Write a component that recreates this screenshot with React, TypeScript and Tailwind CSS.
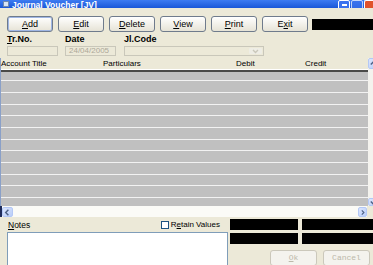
import React from "react";

const toolButtons = [
  { pre: "", key: "A", post: "dd" },
  { pre: "", key: "E", post: "dit" },
  { pre: "", key: "D", post: "elete" },
  { pre: "", key: "V", post: "iew" },
  { pre: "", key: "P", post: "rint" },
  { pre: "E", key: "x", post: "it" },
];

// row heights incl. the white separator line
const rows = [
  "h-[9px]",
  "h-[12px]",
  "h-[12px]",
  "h-[11px]",
  "h-[12px]",
  "h-[12px]",
  "h-[11px]",
  "h-[12px]",
  "h-[12px]",
  "h-[11px]",
  "h-[12px]",
];

const ScrollArrow: React.FC<{ dir: "up" | "down" | "left" | "right"; className?: string }> = ({
  dir,
  className,
}) => {
  const d =
    dir === "up"
      ? "M2 6 L5 3 L8 6"
      : dir === "down"
      ? "M2 4 L5 7 L8 4"
      : dir === "left"
      ? "M6 2 L3 5 L6 8"
      : "M4 2 L7 5 L4 8";
  return (
    <div
      className={`flex items-center justify-center rounded-[2px] border border-[#b4c8f6] bg-gradient-to-br from-[#dce6fd] to-[#b9cdf8] ${className ?? ""}`}
    >
      <svg width="9" height="9" viewBox="0 0 10 10">
        <path d={d} fill="none" stroke="#4d6185" strokeWidth="1.6" />
      </svg>
    </div>
  );
};

const App: React.FC = () => {
  return (
    <div className="w-[373px] h-[265px] overflow-hidden bg-[#ece9d8] flex flex-col text-black font-['Liberation_Sans',Arial,sans-serif]">
      {/* title bar */}
      <div className="h-[8px] shrink-0 flex items-end overflow-hidden bg-gradient-to-b from-[#3d7cf2] to-[#1a57d8]">
        <div className="ml-[3px] mb-[1px] w-[6px] h-[6px] bg-[#d8e4f4] border border-[#6d87b0]" />
        <span className="ml-[3px] mb-[-1px] text-[8.5px] font-bold leading-none text-white whitespace-nowrap">
          Journal Voucher [JV]
        </span>
        <div className="ml-auto flex items-end gap-[1px]">
          <div className="w-[12px] h-[12px] mb-[-4px] rounded-[2px] border border-white bg-[#3a72ee] flex items-end justify-center">
            <div className="w-[5px] h-[2px] bg-white mb-[5px]" />
          </div>
          <div className="w-[12px] h-[12px] mb-[-4px] rounded-[2px] border border-white bg-[#3a72ee] opacity-70" />
          <div className="w-[9px] h-[12px] mb-[-4px] rounded-l-[2px] border border-r-0 border-white bg-[#e0532c]" />
        </div>
      </div>
      <div className="h-[1px] bg-[#f6f4ea]" />

      {/* tool buttons */}
      <div className="flex items-center mt-[8px] pl-[7px] gap-[5px] h-[16px]">
        {toolButtons.map((b, i) => (
          <button
            key={i}
            className={`w-[46px] h-[16px] rounded-[3px] border border-[#6f7b8c] bg-gradient-to-b from-[#ffffff] to-[#e6e3d6] text-[9px] leading-none flex items-center justify-center ${
              i === 0 ? "shadow-[inset_0_0_0_1px_#9fb6e4]" : ""
            }`}
          >
            {b.pre}
            <span className="underline">{b.key}</span>
            {b.post}
          </button>
        ))}
        <div className="ml-[-1px] flex-1 h-[11px] bg-black" />
      </div>

      {/* labels */}
      <div className="flex mt-[3px] h-[10px] items-center text-[9px] font-bold leading-none">
        <span className="ml-[7px] w-[58px]">
          <span className="underline">T</span>r.No.
        </span>
        <span className="w-[59px]">Date</span>
        <span>Jl.Code</span>
      </div>

      {/* inputs */}
      <div className="flex mt-[2px] h-[14px]">
        <div className="ml-[7px] w-[51px] border border-[#c9c7ba] bg-[#ece9d8]" />
        <div className="ml-[7px] w-[51px] border border-[#c9c7ba] bg-[#ece9d8] flex items-center pl-[3px] text-[8px] text-[#aca899] leading-none">
          24/04/2005
        </div>
        <div className="ml-[8px] w-[140px] border border-[#c9c7ba] bg-[#ece9d8] flex justify-end">
          <div className="w-[13px] m-[1px] rounded-[1px] bg-[#eeede5] flex items-center justify-center">
            <svg width="7" height="5" viewBox="0 0 7 5">
              <path d="M1 1 L3.5 3.5 L6 1" fill="none" stroke="#c9c7ba" strokeWidth="1.3" />
            </svg>
          </div>
        </div>
      </div>

      {/* grid */}
      <div className="flex mt-[2px] h-[148px]">
        <div className="flex-1 flex flex-col border-l border-[#8aa0c8]">
          <div className="h-[14px] flex items-center text-[8px] leading-none border-b-2 border-[#4a4a48] shadow-[inset_0_-1px_0_#ffffff]">
            <span className="w-[102px]">Account Title</span>
            <span className="w-[133px]">Particulars</span>
            <span className="w-[69px]">Debit</span>
            <span>Credit</span>
          </div>
          {rows.map((h, i) => (
            <div key={i} className={`${h} bg-[#c0c0c0] border-b border-[#f2f2f2]`} />
          ))}
          <div className="h-[8px] bg-[#c0c0c0]" />
        </div>
        <div className="w-[5px] flex flex-col bg-[#f4f3ee]">
          <ScrollArrow dir="up" className="h-[11px] w-[11px]" />
          <div className="flex-1" />
          <ScrollArrow dir="down" className="h-[8px] w-[11px]" />
        </div>
      </div>

      {/* horizontal scrollbar */}
      <div className="flex h-[11px] bg-[#fbfbf7]">
        <div className="w-[2px] bg-[#1f2c5a]" />
        <ScrollArrow dir="left" className="w-[11px] h-[10px] mt-[1px]" />
        <div className="flex-1" />
        <ScrollArrow dir="right" className="w-[9px] h-[10px] mt-[1px]" />
        <div className="w-[6px] bg-[#ece9d8]" />
      </div>
      <div className="h-[1px] bg-[#a9a69a]" />

      {/* notes section */}
      <div className="flex flex-1">
        <div className="flex flex-col w-[229px]">
          <div className="flex items-center h-[12px] mt-[2px] text-[8.5px] leading-none">
            <span className="ml-[8px]">
              <span className="underline">N</span>otes
            </span>
            <div className="ml-auto flex items-center mr-[8px] text-[8px]">
              <div className="w-[8px] h-[8px] border border-[#1c5180] bg-white" />
              <span className="ml-[2px]">
                R<span className="underline">e</span>tain Values
              </span>
            </div>
          </div>
          <div className="ml-[7px] mt-[1px] w-[221px] flex-1 border border-[#7f9db9] bg-white" />
        </div>
        <div className="flex flex-col mt-[2px] ml-[2px] gap-[3px]">
          <div className="flex gap-[4px]">
            <div className="w-[68px] h-[11px] bg-black" />
            <div className="w-[71px] h-[11px] bg-black" />
          </div>
          <div className="flex gap-[4px]">
            <div className="w-[68px] h-[11px] bg-black" />
            <div className="w-[71px] h-[11px] bg-black" />
          </div>
          <div className="flex gap-[6px] mt-[3px] ml-[40px] font-['Liberation_Mono',monospace]">
            <button className="w-[47px] h-[16px] rounded-[3px] border border-[#cbc8bb] bg-[#f4f3ee] text-[8px] text-[#bcb9aa] leading-none flex items-center justify-center">
              <span className="underline">O</span>k
            </button>
            <button className="w-[47px] h-[16px] rounded-[3px] border border-[#cbc8bb] bg-[#f4f3ee] text-[8px] text-[#bcb9aa] leading-none flex items-center justify-center">
              Cancel
            </button>
          </div>
        </div>
      </div>
    </div>
  );
};

export default App;
